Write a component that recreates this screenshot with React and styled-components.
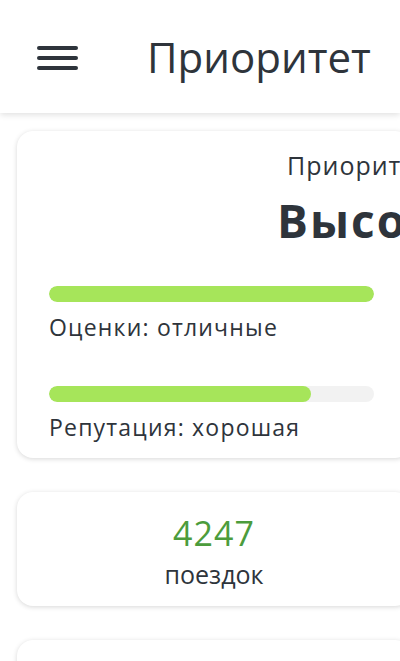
import React from 'react';
import styled, { createGlobalStyle } from 'styled-components';

const GlobalStyle = createGlobalStyle`
  html, body {
    margin: 0;
    padding: 0;
    background: #ffffff;
    overflow-x: hidden;
  }
  body {
    font-family: "Open Sans", "Noto Sans", sans-serif;
    color: #2e343b;
  }
`;

const TopBar = styled.header`
  height: 113px;
  display: flex;
  align-items: center;
  background: #ffffff;
  box-shadow: 0 2px 6px rgba(0, 0, 0, 0.12);
  position: relative;
  z-index: 1;
`;

const MenuButton = styled.button`
  width: 41px;
  height: 24px;
  margin-left: 37px;
  margin-top: 2px;
  padding: 0;
  border: none;
  background: none;
  display: flex;
  flex-direction: column;
  justify-content: space-between;
  cursor: pointer;

  span {
    display: block;
    height: 4px;
    border-radius: 2px;
    background: #2e343b;
  }
`;

const Title = styled.h1`
  margin: 0 0 0 69px;
  font-size: 42px;
  font-weight: 400;
  line-height: 1;
  color: #2e343b;
`;

const Content = styled.main`
  padding: 18px 0 0 17px;
  display: flex;
  flex-direction: column;
  gap: 34px;
`;

const Card = styled.section`
  width: 394px;
  box-sizing: border-box;
  background: #ffffff;
  border-radius: 16px;
  box-shadow: 0 1px 5px rgba(0, 0, 0, 0.16);
  padding: ${p => p.$pad || '0'};
  text-align: ${p => p.$center ? 'center' : 'left'};
  min-height: ${p => p.$minHeight || 'auto'};
`;

const Caption = styled.div`
  font-size: 25px;
  line-height: 33px;
  letter-spacing: 1px;
  padding-left: 238px;
  white-space: nowrap;
`;

const Big = styled.div`
  font-size: 46px;
  font-weight: 700;
  line-height: 54px;
  letter-spacing: 2px;
  padding-left: 228px;
  margin-top: 11px;
  white-space: nowrap;
`;

const Meter = styled.div`
  width: 325px;
  height: 16px;
  border-radius: 8px;
  background: #f2f2f2;
  overflow: hidden;
  margin-top: ${p => p.$top}px;
`;

const Fill = styled.div`
  height: 100%;
  border-radius: 8px;
  background: #a6e55a;
`;

const MeterLabel = styled.div`
  font-size: 23px;
  line-height: 30px;
  letter-spacing: 1.2px;
  margin-top: 10px;
  white-space: nowrap;
`;

const Count = styled.div`
  font-size: 34px;
  line-height: 40px;
  letter-spacing: 1px;
  color: #4c9c3c;
`;

const CountLabel = styled.div`
  font-size: 25px;
  line-height: 30px;
  margin-top: 6px;
`;

const meters = [
  { label: 'Оценки: отличные', value: 1, top: 39 },
  { label: 'Репутация: хорошая', value: 0.805, top: 44 },
];

export default function App() {
  return (
    <>
      <GlobalStyle />
      <TopBar>
        <MenuButton aria-label="menu">
          <span />
          <span />
          <span />
        </MenuButton>
        <Title>Приоритет</Title>
      </TopBar>
      <Content>
        <Card $pad="18px 32px 16px">
          <Caption>Приоритет</Caption>
          <Big>Высокий</Big>
          {meters.map(m => (
            <div key={m.label}>
              <Meter $top={m.top}>
                <Fill style={{ width: `${m.value * 100}%` }} />
              </Meter>
              <MeterLabel>{m.label}</MeterLabel>
            </div>
          ))}
        </Card>
        <Card $pad="21px 0 17px" $center>
          <Count>4247</Count>
          <CountLabel>поездок</CountLabel>
        </Card>
        <Card $minHeight="120px" />
      </Content>
    </>
  );
}
